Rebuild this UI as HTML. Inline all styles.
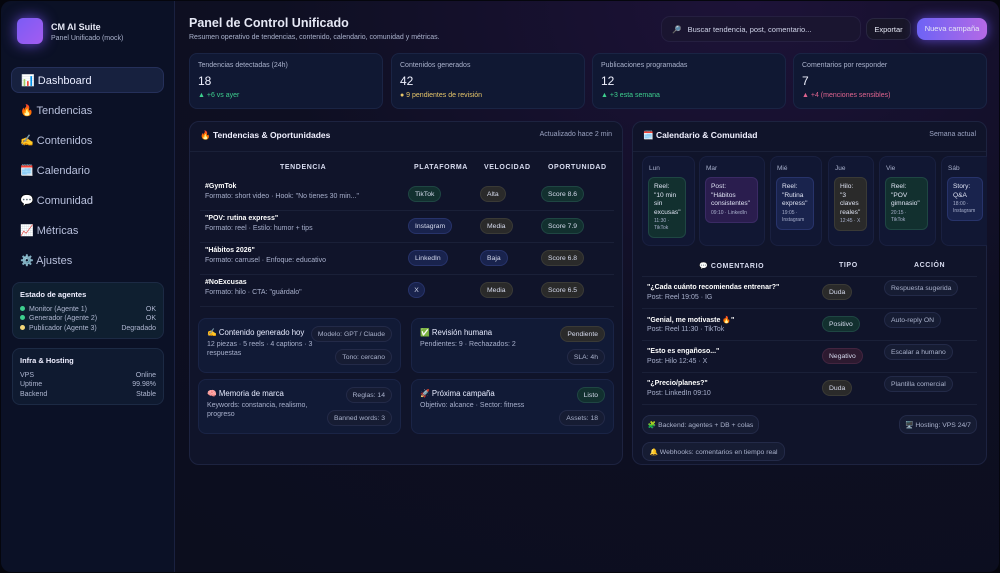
<!DOCTYPE html>
<html><head><meta charset="utf-8"><style>
*{box-sizing:border-box;margin:0;padding:0}
body{width:1000px;height:573px;overflow:hidden;background:#05060d;font-family:"Liberation Sans","DejaVu Sans",sans-serif;color:#e6e8f5}
.frame{position:absolute;left:1px;top:1px;width:998px;height:571px;border-radius:10px;overflow:hidden;background:radial-gradient(ellipse at 75% 0%,#1d1238 0%,#0e0f22 45%,#0b0e1d 100%)}
.side{position:absolute;left:0;top:0;width:174px;height:571px;background:#0b1126;border-right:1px solid #1a2140}
.abs{position:absolute}
.logo{left:16px;top:17px;width:26px;height:26px;border-radius:6px;background:linear-gradient(135deg,#7b5cf5,#a35cf0);box-shadow:0 0 14px #6a4bd8}
.nav{position:absolute;left:10px;width:153px;height:26px;font-size:11px;color:#b8c0dc;display:flex;align-items:center;padding-left:9px;gap:5px}
.nav.act{background:#17213f;border:1px solid #25305a;border-radius:8px;color:#e8ecff}
.box{position:absolute;left:11px;width:152px;border-radius:8px;border:1px solid #1c2a44;padding:7px 7px;font-size:7px;color:#aeb6d0;line-height:9.6px}
.box b{color:#eef;font-size:7.5px;display:block;margin-bottom:5px}
.row{display:flex;justify-content:space-between}
.dot{display:inline-block;width:5px;height:5px;border-radius:50%;margin-right:4px}
.stat{position:absolute;top:52px;height:56px;width:194px;border-radius:8px;background:#101833;border:1px solid #1a2444;padding:8px 8px;font-size:7px;color:#aab2cc}
.stat .num{font-size:12px;color:#f0f2ff;margin:5px 0 4px}
.panel{position:absolute;top:120px;height:344px;border-radius:10px;background:#10142a;border:1px solid #1d2340}
.ph{position:absolute;left:10px;top:8px;font-size:8.5px;font-weight:bold;color:#f0f0ff}
.pr{position:absolute;right:10px;top:9px;font-size:7px;color:#9aa2c0}
.th{position:absolute;font-size:7px;font-weight:bold;letter-spacing:.6px;color:#d8dcf0}
.tr{position:absolute;left:10px;width:414px;height:32px;border-bottom:1px solid #1a2038}
.t1{position:absolute;left:5px;top:4px;font-size:7px;font-weight:bold;color:#fff}
.t2{position:absolute;left:5px;top:14px;font-size:7px;color:#a8b0cc}
.pill{position:absolute;height:16px;border-radius:8px;font-size:6.8px;display:flex;align-items:center;justify-content:center;padding:0 6px;color:#d6dbee;white-space:nowrap}
.g{background:#12302f;border:1px solid #1f4643}
.b{background:#19234d;border:1px solid #27336a}
.n{background:#2a2a2a;border:1px solid #3a3a36}
.r{background:#2d1a30;border:1px solid #432540}
.d{background:#161c33;border:1px solid #232a48;color:#aab2cc}
.mini{position:absolute;width:203px;height:55px;border-radius:8px;background:#111a36;border:1px solid #1a2446;font-size:7px;color:#a8b0cc}
.mini .h{position:absolute;left:8px;top:9px;font-size:7.8px;color:#e8ecff}
.mini .s{position:absolute;left:8px;top:21px;width:110px;line-height:9px}
.day{position:absolute;top:155px;height:90px;border-radius:8px;background:#111733;border:1px solid #192040;font-size:6.5px;color:#a8b0cc}
.day .l{position:absolute;left:6px;top:8px}
.ev{position:absolute;left:5px;top:20px;border-radius:6px;padding:5px 5px;font-size:6.6px;color:#e0e4f4;line-height:8.5px}
.ev small{display:block;font-size:5px;color:#a8b0cc;line-height:7px;margin-top:1px}
</style></head><body><div class="frame">
<div class="side">
<div class="abs logo"></div>
<div class="abs" style="left:50px;top:21px;font-size:9px;font-weight:bold">CM AI Suite</div>
<div class="abs" style="left:50px;top:34px;font-size:7px;color:#aab2cc">Panel Unificado (mock)</div>
<div class="nav act" style="top:66px">📊 Dashboard</div>
<div class="nav" style="top:96px">🔥 Tendencias</div>
<div class="nav" style="top:126px">✍️ Contenidos</div>
<div class="nav" style="top:156px">🗓️ Calendario</div>
<div class="nav" style="top:186px">💬 Comunidad</div>
<div class="nav" style="top:216px">📈 Métricas</div>
<div class="nav" style="top:246px">⚙️ Ajustes</div>
<div class="box" style="top:281px;height:57px;background:#0f1f30"><b>Estado de agentes</b>
<div class="row"><span><i class="dot" style="background:#3ecf8e"></i>Monitor (Agente 1)</span><span>OK</span></div>
<div class="row"><span><i class="dot" style="background:#3ecf8e"></i>Generador (Agente 2)</span><span>OK</span></div>
<div class="row"><span><i class="dot" style="background:#f3d77a"></i>Publicador (Agente 3)</span><span>Degradado</span></div></div>
<div class="box" style="top:347px;height:57px;background:#0f1a30"><b>Infra &amp; Hosting</b>
<div class="row"><span>VPS</span><span>Online</span></div>
<div class="row"><span>Uptime</span><span>99.98%</span></div>
<div class="row"><span>Backend</span><span>Stable</span></div></div>
</div>

<div class="abs" style="left:188px;top:15px;font-size:12.5px;font-weight:bold">Panel de Control Unificado</div>
<div class="abs" style="left:188px;top:33px;font-size:7px;color:#aab2cc">Resumen operativo de tendencias, contenido, calendario, comunidad y métricas.</div>
<div class="abs" style="left:660px;top:15px;width:200px;height:26px;border-radius:9px;background:#1a1530;border:1px solid #251f40;font-size:7.5px;color:#cfd3e8;padding:8px 0 0 10px">🔎 &nbsp;&nbsp;Buscar tendencia, post, comentario...</div>
<div class="abs" style="left:865px;top:17px;width:45px;height:22px;border-radius:8px;background:#181628;border:1px solid #282640;font-size:7.5px;text-align:center;line-height:21px">Exportar</div>
<div class="abs" style="left:916px;top:17px;width:70px;height:22px;border-radius:8px;background:linear-gradient(90deg,#6d63f5,#b469e6);box-shadow:0 0 12px #5b46c8;font-size:7.5px;text-align:center;line-height:22px">Nueva campaña</div>

<div class="stat" style="left:188px">Tendencias detectadas (24h)<div class="num">18</div><span style="color:#3ecf8e">▲ +6 vs ayer</span></div>
<div class="stat" style="left:390px">Contenidos generados<div class="num">42</div><span style="color:#e7c66a">● 9 pendientes de revisión</span></div>
<div class="stat" style="left:591px">Publicaciones programadas<div class="num">12</div><span style="color:#3ecf8e">▲ +3 esta semana</span></div>
<div class="stat" style="left:792px">Comentarios por responder<div class="num">7</div><span style="color:#e0648f">▲ +4 (menciones sensibles)</span></div>

<div class="panel" style="left:188px;width:434px">
<div class="ph">🔥 Tendencias &amp; Oportunidades</div><div class="pr">Actualizado hace 2 min</div>
<div class="abs" style="left:0;right:0;top:29px;border-top:1px solid #1a2038"></div>
<div class="th" style="left:90px;top:42px">TENDENCIA</div>
<div class="th" style="left:224px;top:42px">PLATAFORMA</div>
<div class="th" style="left:294px;top:42px">VELOCIDAD</div>
<div class="th" style="left:358px;top:42px">OPORTUNIDAD</div>
<div class="tr" style="top:57px"><div class="t1">#GymTok</div><div class="t2">Formato: short video · Hook: "No tienes 30 min..."</div>
<div class="pill g" style="left:208px;top:7px">TikTok</div><div class="pill n" style="left:280px;top:7px">Alta</div><div class="pill g" style="left:341px;top:7px">Score 8.6</div></div>
<div class="tr" style="top:89px"><div class="t1">"POV: rutina express"</div><div class="t2">Formato: reel · Estilo: humor + tips</div>
<div class="pill b" style="left:208px;top:7px">Instagram</div><div class="pill n" style="left:280px;top:7px">Media</div><div class="pill g" style="left:341px;top:7px">Score 7.9</div></div>
<div class="tr" style="top:121px"><div class="t1">"Hábitos 2026"</div><div class="t2">Formato: carrusel · Enfoque: educativo</div>
<div class="pill b" style="left:208px;top:7px">LinkedIn</div><div class="pill b" style="left:280px;top:7px">Baja</div><div class="pill n" style="left:341px;top:7px">Score 6.8</div></div>
<div class="tr" style="top:153px"><div class="t1">#NoExcusas</div><div class="t2">Formato: hilo · CTA: "guárdalo"</div>
<div class="pill b" style="left:208px;top:7px;width:17px;padding:0">X</div><div class="pill n" style="left:280px;top:7px">Media</div><div class="pill n" style="left:341px;top:7px">Score 6.5</div></div>

<div class="mini" style="left:8px;top:196px"><div class="h">✍️ Contenido generado hoy</div><div class="s">12 piezas · 5 reels · 4 captions · 3 respuestas</div>
<div class="pill d" style="right:8px;top:7px">Modelo: GPT / Claude</div><div class="pill d" style="right:8px;top:30px">Tono: cercano</div></div>
<div class="mini" style="left:221px;top:196px"><div class="h">✅ Revisión humana</div><div class="s" style="width:140px">Pendientes: 9 · Rechazados: 2</div>
<div class="pill n" style="right:8px;top:7px">Pendiente</div><div class="pill d" style="right:8px;top:30px">SLA: 4h</div></div>
<div class="mini" style="left:8px;top:257px"><div class="h">🧠 Memoria de marca</div><div class="s">Keywords: constancia, realismo, progreso</div>
<div class="pill d" style="right:8px;top:7px">Reglas: 14</div><div class="pill d" style="right:8px;top:30px">Banned words: 3</div></div>
<div class="mini" style="left:221px;top:257px"><div class="h">🚀 Próxima campaña</div><div class="s" style="width:140px">Objetivo: alcance · Sector: fitness</div>
<div class="pill g" style="right:8px;top:7px">Listo</div><div class="pill d" style="right:8px;top:30px">Assets: 18</div></div>
</div>

<div class="panel" style="left:631px;width:355px;overflow:hidden">
<div class="ph">🗓️ Calendario &amp; Comunidad</div><div class="pr">Semana actual</div>
<div class="abs" style="left:0;right:0;top:29px;border-top:1px solid #1a2038"></div>
</div>
<div class="day" style="left:641px;width:53px"><div class="l">Lun</div><div class="ev g" style="width:38px">Reel: "10 min sin excusas"<small>11:30 · TikTok</small></div></div>
<div class="day" style="left:698px;width:66px"><div class="l">Mar</div><div class="ev" style="width:53px;background:#2a1d4e;border:1px solid #3a2a64">Post: "Hábitos consistentes"<small>09:10 · LinkedIn</small></div></div>
<div class="day" style="left:769px;width:52px"><div class="l">Mié</div><div class="ev b" style="width:38px">Reel: "Rutina express"<small>19:05 · Instagram</small></div></div>
<div class="day" style="left:827px;width:46px"><div class="l">Jue</div><div class="ev n" style="width:33px">Hilo: "3 claves reales"<small>12:45 · X</small></div></div>
<div class="day" style="left:878px;width:57px"><div class="l">Vie</div><div class="ev g" style="width:43px">Reel: "POV gimnasio"<small>20:15 · TikTok</small></div></div>
<div class="day" style="left:940px;width:46px;border-right:none;border-radius:8px 0 0 8px"><div class="l">Sáb</div><div class="ev b" style="width:36px">Story: Q&amp;A<small>18:00 · Instagram</small></div></div>

<div class="th" style="left:698px;top:261px">💬 COMENTARIO</div>
<div class="th" style="left:838px;top:261px">TIPO</div>
<div class="th" style="left:913px;top:261px">ACCIÓN</div>
<div class="abs" style="left:641px;top:275px;width:335px;border-top:1px solid #1a2038"></div>
<div class="tr" style="left:641px;top:276px;width:335px"><div class="t1" style="top:7px">"¿Cada cuánto recomiendas entrenar?"</div><div class="t2" style="top:17px">Post: Reel 19:05 · IG</div><div class="pill n" style="left:180px;top:7px">Duda</div><div class="pill d" style="left:242px;top:3px">Respuesta sugerida</div></div>
<div class="tr" style="left:641px;top:308px;width:335px"><div class="t1" style="top:7px">"Genial, me motivaste 🔥"</div><div class="t2" style="top:17px">Post: Reel 11:30 · TikTok</div><div class="pill g" style="left:180px;top:7px">Positivo</div><div class="pill d" style="left:242px;top:3px">Auto-reply ON</div></div>
<div class="tr" style="left:641px;top:340px;width:335px"><div class="t1" style="top:7px">"Esto es engañoso..."</div><div class="t2" style="top:17px">Post: Hilo 12:45 · X</div><div class="pill r" style="left:180px;top:7px">Negativo</div><div class="pill d" style="left:242px;top:3px">Escalar a humano</div></div>
<div class="tr" style="left:641px;top:372px;width:335px"><div class="t1" style="top:7px">"¿Precio/planes?"</div><div class="t2" style="top:17px">Post: LinkedIn 09:10</div><div class="pill n" style="left:180px;top:7px">Duda</div><div class="pill d" style="left:242px;top:3px">Plantilla comercial</div></div>
<div class="pill d" style="left:641px;top:414px;height:19px;width:117px">🧩 Backend: agentes + DB + colas</div>
<div class="pill d" style="left:898px;top:414px;height:19px;width:78px">🖥️ Hosting: VPS 24/7</div>
<div class="pill d" style="left:641px;top:441px;height:19px;width:143px">🔔 Webhooks: comentarios en tiempo real</div>
</div></body></html>
